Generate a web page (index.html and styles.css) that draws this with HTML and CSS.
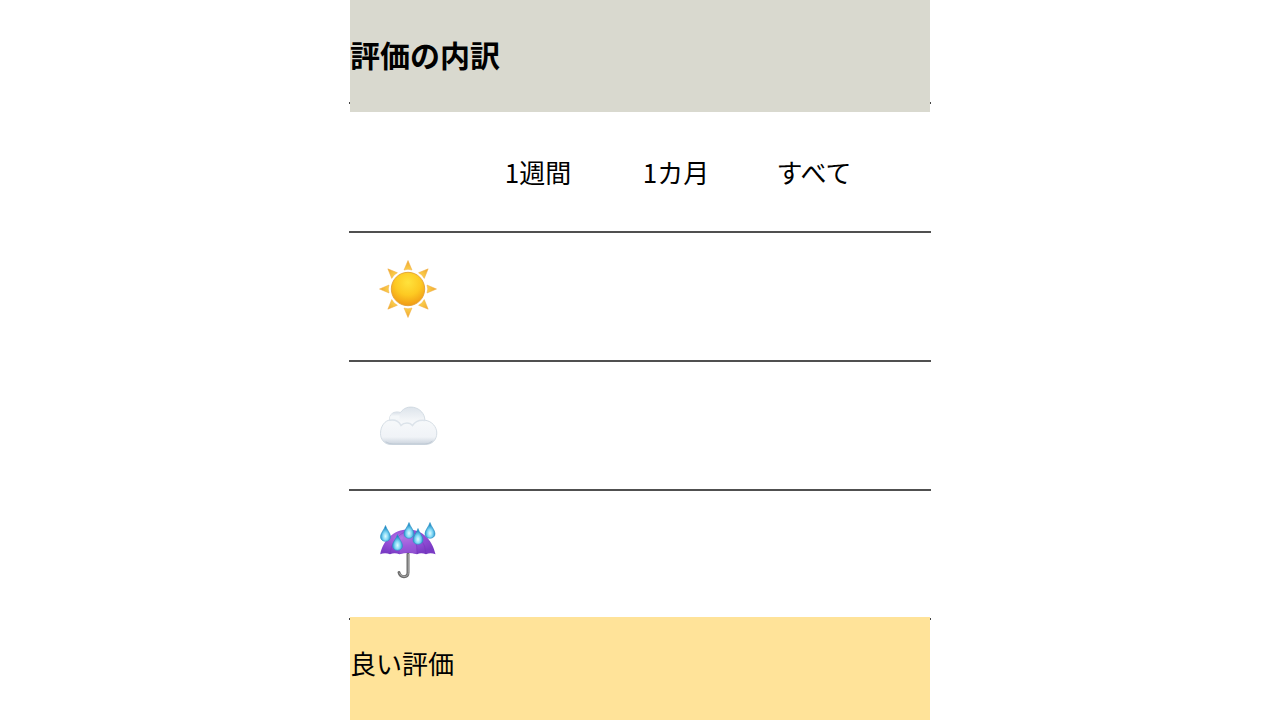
FILE: index.html
```html
<!DOCTYPE html>
<html lang="ja">
	<head>
		<meta charset="utf-8">
		<meta name="viewport" content="width=device-width, initial-scale=1">
		<title>評価の内訳</title>
		<link rel="stylesheet" href="styles.css">
	</head>
	<body>
		<main class="review">
			<header class="review-title">
				<h1>評価の内訳</h1>
			</header>

			<table class="score">
				<thead>
					<tr>
						<td class="weather"></td>
						<th scope="col">1週間</th>
						<th scope="col">1カ月</th>
						<th scope="col">すべて</th>
						<td class="space"></td>
					</tr>
				</thead>
				<tbody>
					<tr>
						<th scope="row" class="weather">
							<svg class="icon" viewBox="0 0 60 76" role="img" aria-label="晴れ">
								<defs>
									<radialGradient id="sun" cx="50%" cy="30%" r="70%">
										<stop offset="0" stop-color="#ffe23c"/>
										<stop offset="0.55" stop-color="#fdc922"/>
										<stop offset="1" stop-color="#f09a14"/>
									</radialGradient>
									<linearGradient id="ray" x1="0" y1="0" x2="0" y2="1">
										<stop offset="0" stop-color="#efa62f"/>
										<stop offset="1" stop-color="#fbd04c"/>
									</linearGradient>
									<path id="beam" d="M29 1.5 L33 11 Q29 9.5 25 11 Z" fill="url(#ray)" stroke="#f0ad42" stroke-width="0.5"/>
								</defs>
								<use href="#beam"/>
								<use href="#beam" transform="rotate(45 29 30)"/>
								<use href="#beam" transform="rotate(90 29 30)"/>
								<use href="#beam" transform="rotate(135 29 30)"/>
								<use href="#beam" transform="rotate(180 29 30)"/>
								<use href="#beam" transform="rotate(225 29 30)"/>
								<use href="#beam" transform="rotate(270 29 30)"/>
								<use href="#beam" transform="rotate(315 29 30)"/>
								<circle cx="29" cy="30" r="16.7" fill="url(#sun)" stroke="#e2a136" stroke-width="0.9"/>
							</svg>
						</th>
						<td></td>
						<td></td>
						<td></td>
						<td class="space"></td>
					</tr>
					<tr>
						<th scope="row" class="weather">
							<svg class="icon" viewBox="0 0 60 76" role="img" aria-label="くもり">
								<defs>
									<linearGradient id="cloud" x1="0" y1="0" x2="0" y2="1">
										<stop offset="0" stop-color="#dde4eb"/>
										<stop offset="0.4" stop-color="#f6f8fa"/>
										<stop offset="0.8" stop-color="#f0f3f7"/>
										<stop offset="1" stop-color="#c9d2dc"/>
									</linearGradient>
									<linearGradient id="puff" x1="0" y1="0" x2="0" y2="1">
										<stop offset="0" stop-color="#d9e0e8"/>
										<stop offset="0.5" stop-color="#f4f7f9"/>
									</linearGradient>
								</defs>
								<path d="M11 56.5 C5 56 1.5 51 1.5 45.5 C1.5 38 6 32.5 11 32 C9.5 26 15.5 22.5 21.5 24.5 C25 19.5 30 18.5 34.5 19.3 C41 20.5 46 26 45.8 32.2 C53 33 57.8 39 57.8 45 C57.8 52 53 56.5 46.5 56.5 Z" fill="url(#cloud)" stroke="#ccd5de" stroke-width="0.8"/>
								<path d="M11.3 32 C9.8 26 15.5 22.8 21.5 24.9 C20 28 20.3 29.5 21 31.5 Z" fill="url(#puff)"/>
								<path d="M11 32.2 C16.5 31.5 20 33.5 22 37.5 C25 34 31 34 33.5 37.5 C36 33.5 41 31.8 45.8 32.4" fill="none" stroke="#dce3ea" stroke-width="1.5" stroke-linecap="round"/>
								<path d="M7 54 Q10 56 14 56 H46 Q50 56 53 53.5" fill="none" stroke="#c0cad5" stroke-width="1" stroke-linecap="round"/>
							</svg>
						</th>
						<td></td>
						<td></td>
						<td></td>
						<td class="space"></td>
					</tr>
					<tr>
						<th scope="row" class="weather">
							<svg class="icon" viewBox="0 0 60 76" role="img" aria-label="雨">
								<defs>
									<radialGradient id="canopy" cx="42%" cy="35%" r="65%">
										<stop offset="0" stop-color="#b67be6"/>
										<stop offset="0.5" stop-color="#9650d8"/>
										<stop offset="1" stop-color="#7a3bc4"/>
									</radialGradient>
									<radialGradient id="water" cx="50%" cy="68%" r="55%">
										<stop offset="0" stop-color="#e0fbff"/>
										<stop offset="0.45" stop-color="#83d9f6"/>
										<stop offset="1" stop-color="#1789c4"/>
									</radialGradient>
									<path id="drop" d="M0 -8 C1.2 -3.8 5 -0.5 5 3.2 C5 6 2.8 7.8 0 7.8 C-2.8 7.8 -5 6 -5 3.2 C-5 -0.5 -1.2 -3.8 0 -8 Z" fill="url(#water)" stroke="#2b91c4" stroke-width="0.6"/>
								</defs>
								<path d="M29 38 V56.5 Q29 60.7 25 60.7 Q21 60.7 20 56.5" fill="none" stroke="#6c6c6c" stroke-width="3" stroke-linecap="round"/>
								<path d="M29.3 38 V56.5 Q29.3 60.5 25 60.5 Q21.5 60.5 20.3 56.8" fill="none" stroke="#a8a8a8" stroke-width="1"/>
								<path d="M1.2 38.3 C4 24 15 13.5 29 13.5 C43 13.5 53 23 56.5 38.3 Q51.5 36 47 38.3 Q42 36 38 38.3 Q29 35.5 20.5 38.3 Q15.5 36 11 38.3 Q6 36 1.2 38.3 Z" fill="url(#canopy)"/>
								<path d="M29 14 Q21 22 20.5 38 Q29 35 38 38 Q37.5 23 29 14 Z" fill="#a766dd" opacity="0.45"/>
								<path d="M29 14 Q39 22 38 38 M30 14 Q46 21 47 38 M29 14 Q12 22 11 38" fill="none" stroke="#6c2db0" stroke-width="0.7" opacity="0.5"/>
								<use href="#drop" transform="translate(6.5 17.5)"/>
								<use href="#drop" transform="translate(18.5 26.5)"/>
								<use href="#drop" transform="translate(30 14.5)"/>
								<use href="#drop" transform="translate(39 20.5)"/>
								<use href="#drop" transform="translate(51 14.5)"/>
							</svg>
						</th>
						<td></td>
						<td></td>
						<td></td>
						<td class="space"></td>
					</tr>
				</tbody>
			</table>

			<section class="good">
				<h2>良い評価</h2>
			</section>
		</main>
	</body>
</html>
```
FILE: styles.css
```css
*{
	margin: 0;
	padding: 0;
	box-sizing: border-box;
}
body{
	background: #fff;
	color: #000;
	font-family: "Noto Sans CJK JP", sans-serif;
	font-size: 26px;
	line-height: 40px;
}
.review{
	display: flex;
	flex-direction: column;
	max-width: 582px;
	min-height: 100vh;
	margin: 0 auto;
}
.review-title,
.good{
	position: relative;
	margin: 0 1px;
}
.review-title{
	padding: 34px 0 38px;
	background: #d9d9cf;
}
.review-title h1{
	font-size: 30px;
	font-weight: bold;
}

/* ends of the rules that run behind the coloured bands */
.review-title::before,
.good::before{
	content: "";
	position: absolute;
	left: -1px;
	right: -1px;
	height: 2px;
	background: #444;
	z-index: -1;
}
.review-title::before{
	bottom: 8px;
}
.good::before{
	top: 1px;
}

.score{
	width: 100%;
	table-layout: fixed;
	border-spacing: 0;
}
.score th,
.score td{
	height: 129px;
	border-bottom: 2px solid #505050;
	font-weight: normal;
	text-align: center;
	vertical-align: middle;
}
.score thead th,
.score thead td{
	height: 121px;
}
.score tbody tr:last-child th,
.score tbody tr:last-child td{
	height: 126px;
	border-bottom: none;
}
.score .weather{
	width: 120px;
}
.score .space{
	width: 48px;
}
.icon{
	display: block;
	width: 60px;
	height: 76px;
	margin: 0 auto;
}

.good{
	flex: 1;
	padding: 26px 0;
	background: #ffe399;
}
.good h2{
	font-size: 26px;
	font-weight: normal;
}
```
